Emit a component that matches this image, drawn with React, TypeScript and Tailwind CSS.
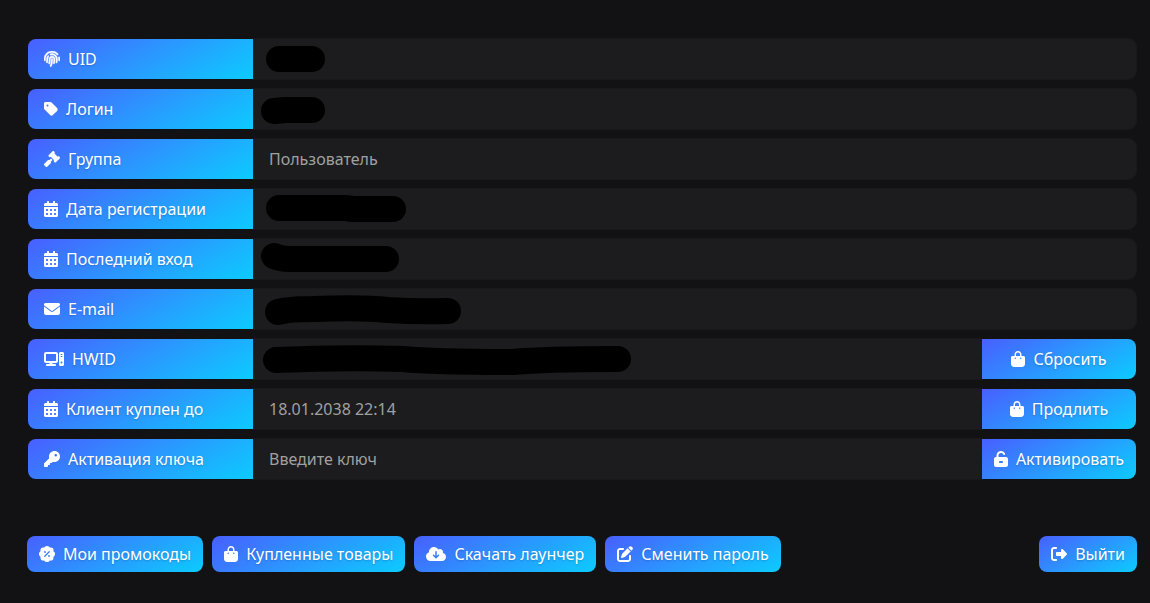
import type { ReactNode } from 'react';
import {
  FaBagShopping,
  FaCalendarDays,
  FaCloudArrowDown,
  FaComputer,
  FaEnvelope,
  FaFingerprint,
  FaGavel,
  FaKey,
  FaPenToSquare,
  FaRightFromBracket,
  FaTag,
  FaUnlockKeyhole,
} from 'react-icons/fa6';

const gradient = 'bg-[linear-gradient(150deg,#485fff_0%,#2b96ff_50%,#0ccbff_100%)]';
const textShadow = '[text-shadow:0_1px_2px_rgba(0,0,0,0.2)]';

// the glyphs have different proportions, so the text starts where each one ends
const narrow = 'h-4 w-[14px] shrink-0';
const square = 'size-4 shrink-0';
const wide = 'h-4 w-5 shrink-0';

type Row = {
  id: string;
  icon: ReactNode;
  label: string;
  value?: string;
  placeholder?: string;
  mask?: string;
  action?: { icon: ReactNode; label: string };
};

const rows: Row[] = [
  { id: 'uid', icon: <FaFingerprint className={square} strokeWidth={14} />, label: 'UID', mask: 'M26 20H59' },
  { id: 'login', icon: <FaTag className={narrow} />, label: 'Логин', mask: 'M21 22L33 21H59' },
  { id: 'group', icon: <FaGavel className={square} />, label: 'Группа', value: 'Пользователь' },
  {
    id: 'registered',
    icon: <FaCalendarDays className={narrow} />,
    label: 'Дата регистрации',
    mask: 'M26 19H92L100 20H140',
  },
  {
    id: 'last-login',
    icon: <FaCalendarDays className={narrow} />,
    label: 'Последний вход',
    mask: 'M21 17Q28 20 36 20H133',
  },
  {
    id: 'email',
    icon: <FaEnvelope className={square} />,
    label: 'E-mail',
    mask: 'M25 23Q35 20 60 20Q110 18 135 21Q165 23 195 22',
  },
  {
    id: 'hwid',
    icon: <FaComputer className={wide} />,
    label: 'HWID',
    mask: 'M23 21Q90 18 150 20Q180 23 260 23Q290 20 365 20',
    action: { icon: <FaBagShopping className={narrow} />, label: 'Сбросить' },
  },
  {
    id: 'expires',
    icon: <FaCalendarDays className={narrow} />,
    label: 'Клиент куплен до',
    value: '18.01.2038 22:14',
    action: { icon: <FaBagShopping className={narrow} />, label: 'Продлить' },
  },
  {
    id: 'key',
    icon: <FaKey className={square} />,
    label: 'Активация ключа',
    placeholder: 'Введите ключ',
    action: { icon: <FaUnlockKeyhole className={narrow} />, label: 'Активировать' },
  },
];

function BadgePercent() {
  return (
    <svg viewBox="0 0 16 16" className={square} aria-hidden="true">
      <g fill="currentColor">
        <circle cx="8" cy="8" r="6.9" />
        <circle cx="8" cy="2.8" r="2.8" />
        <circle cx="11.7" cy="4.3" r="2.8" />
        <circle cx="13.2" cy="8" r="2.8" />
        <circle cx="11.7" cy="11.7" r="2.8" />
        <circle cx="8" cy="13.2" r="2.8" />
        <circle cx="4.3" cy="11.7" r="2.8" />
        <circle cx="2.8" cy="8" r="2.8" />
        <circle cx="4.3" cy="4.3" r="2.8" />
      </g>
      <path d="M5.8 10.2L10.2 5.8" stroke="#3a78ff" strokeWidth="1.3" strokeLinecap="round" />
      <circle cx="6" cy="6" r="0.9" fill="#3a78ff" />
      <circle cx="10" cy="10" r="0.9" fill="#3a78ff" />
    </svg>
  );
}

function ProfileRow({ row }: { row: Row }) {
  return (
    <div className="flex h-10">
      <label
        htmlFor={row.id}
        className={`relative z-10 flex w-[225px] shrink-0 items-center gap-2 rounded-l-lg px-4 ${gradient} ${textShadow}`}
      >
        {row.icon}
        {row.label}
      </label>
      <div className="relative min-w-0 flex-1">
        <input
          id={row.id}
          type="text"
          defaultValue={row.value}
          placeholder={row.placeholder}
          readOnly={!row.placeholder}
          className={`h-full w-full bg-[#1c1c1e] px-4 text-[#a0a0a0] shadow-[0_0_0_1px_#19191b] outline-none placeholder:text-[#a0a0a0] ${
            row.action ? '' : 'rounded-r-lg'
          }`}
        />
        {row.mask && (
          <svg
            className="pointer-events-none absolute left-0 top-0 overflow-visible"
            width="400"
            height="40"
            fill="none"
            aria-hidden="true"
          >
            <path d={row.mask} stroke="#000" strokeWidth="26" strokeLinecap="round" strokeLinejoin="round" />
          </svg>
        )}
      </div>
      {row.action && (
        <button
          type="button"
          className={`relative flex w-[154px] shrink-0 items-center justify-center gap-2 rounded-r-lg ${gradient} ${textShadow}`}
        >
          {row.action.icon}
          {row.action.label}
        </button>
      )}
    </div>
  );
}

function ActionButton({ icon, children }: { icon: ReactNode; children: ReactNode }) {
  return (
    <button
      type="button"
      className={`flex h-9 items-center gap-2 whitespace-nowrap rounded-lg px-3 ${gradient} ${textShadow}`}
    >
      {icon}
      {children}
    </button>
  );
}

export default function App() {
  return (
    <main className="min-h-screen bg-[#121214] pb-[31px] pl-[27px] pr-[13px] pt-[39px] font-['Noto_Sans',sans-serif] text-base text-white">
      <form className="flex flex-col gap-[10px] px-px" onSubmit={(e) => e.preventDefault()}>
        {rows.map((row) => (
          <ProfileRow key={row.id} row={row} />
        ))}
      </form>

      <div className="mt-[57px] flex flex-wrap justify-between gap-2">
        <div className="flex flex-wrap gap-[9px]">
          <ActionButton icon={<BadgePercent />}>Мои промокоды</ActionButton>
          <ActionButton icon={<FaBagShopping className={narrow} />}>Купленные товары</ActionButton>
          <ActionButton icon={<FaCloudArrowDown className={wide} />}>Скачать лаунчер</ActionButton>
          <ActionButton icon={<FaPenToSquare className={square} />}>Сменить пароль</ActionButton>
        </div>
        <ActionButton icon={<FaRightFromBracket className={square} />}>Выйти</ActionButton>
      </div>
    </main>
  );
}
